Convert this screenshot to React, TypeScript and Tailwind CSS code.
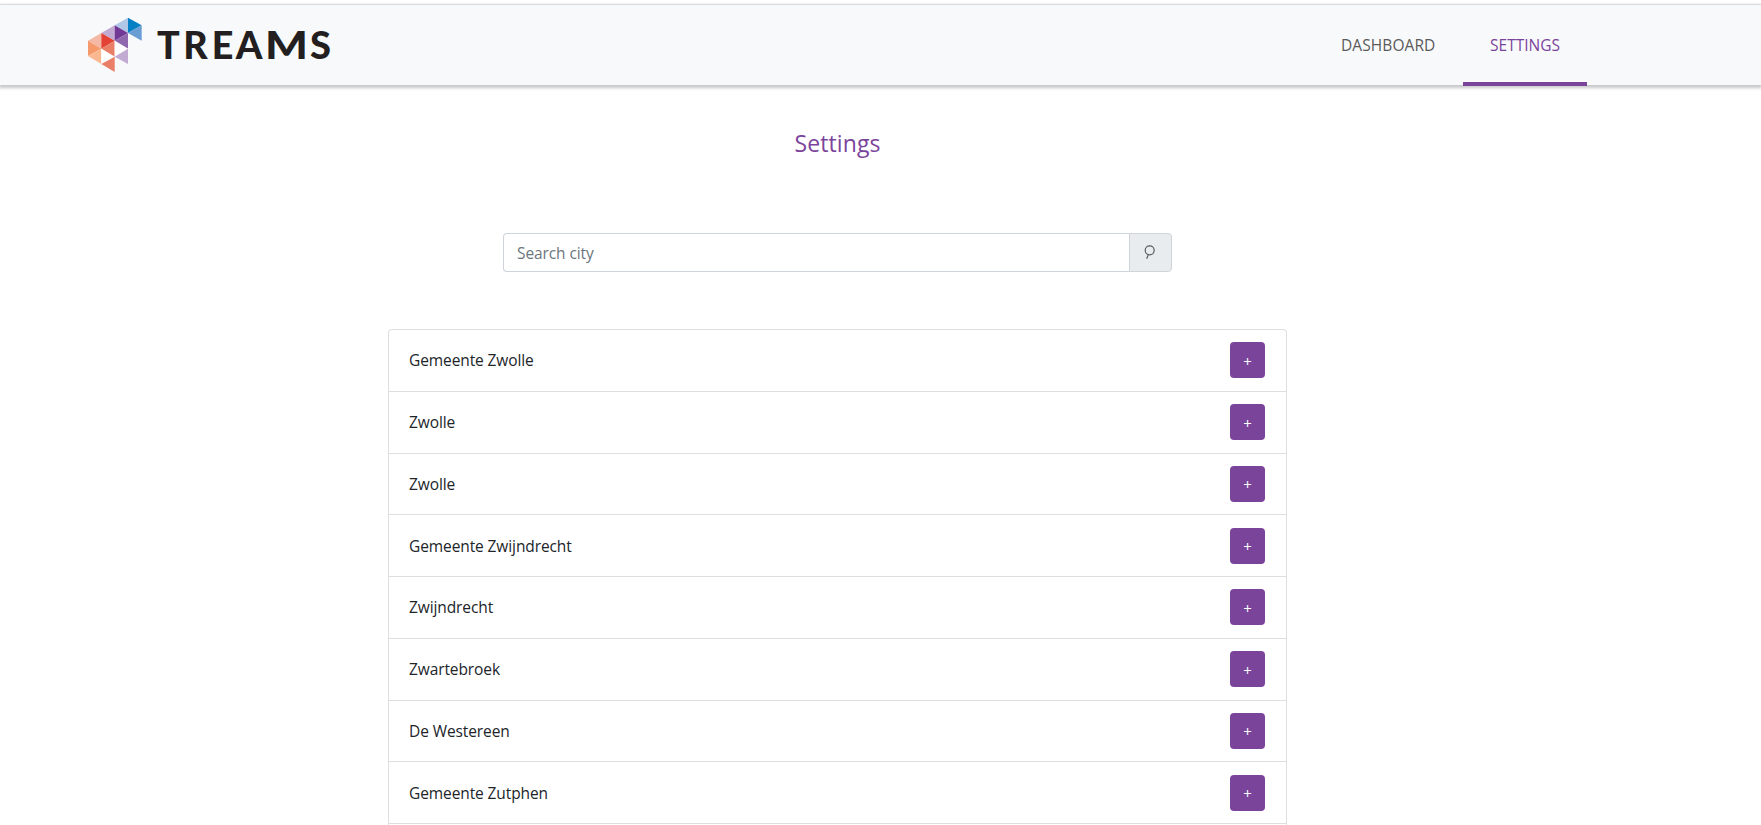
import React from "react";

const cities = [
  "Gemeente Zwolle",
  "Zwolle",
  "Zwolle",
  "Gemeente Zwijndrecht",
  "Zwijndrecht",
  "Zwartebroek",
  "De Westereen",
  "Gemeente Zutphen",
];

const triangles: [string, string][] = [
  ["24,122 64,99 64,146", "#f4b9a5"],
  ["24,122 24,168 64,146", "#f6996a"],
  ["24,168 64,146 64,192", "#fab891"],
  ["64,99 104,76 104,122", "#c2abd3"],
  ["64,99 64,146 104,122", "#e34234"],
  ["64,146 104,122 104,170", "#e97f66"],
  ["64,146 64,192 104,170", "#ffffff"],
  ["64,192 104,170 104,216", "#e97f66"],
  ["104,76 144,53 144,99", "#b0c8e8"],
  ["104,76 104,122 144,99", "#713895"],
  ["104,122 144,99 144,146", "#9068ae"],
  ["104,122 104,170 144,146", "#ffffff"],
  ["104,170 144,146 144,192", "#c2abd3"],
  ["144,53 144,99 185,76", "#0580c5"],
  ["144,99 185,76 185,122", "#6a9dd4"],
];

function Logo() {
  return (
    <svg className="h-[72px] w-[260px]" viewBox="0 15 780 216" role="img" aria-label="TREAMS">
      {triangles.map(([points, fill]) => (
        <polygon key={points} points={points} fill={fill} />
      ))}
      <g fontFamily="Lato, sans-serif" fontWeight="900" fontSize="113" fill="#231f20">
        <text x="231 310 395" y="176">
          TRE
        </text>
        <text x="467" y="176" textLength="80" lengthAdjust="spacingAndGlyphs">
          A
        </text>
        <text x="555" y="176" textLength="129" lengthAdjust="spacingAndGlyphs">
          M
        </text>
        <text x="690" y="176" textLength="63" lengthAdjust="spacingAndGlyphs">
          S
        </text>
      </g>
    </svg>
  );
}

export default function App() {
  return (
    <div className="h-[825px] overflow-hidden bg-white pt-1 font-['Open_Sans',sans-serif] text-[#212529]">
      <header className="flex h-[81px] items-start justify-between border-t border-[#d9dbe1] bg-[#f8f9fb] pr-[174px] pl-20 shadow-[0_2px_3px_1px_rgba(0,0,0,0.22)]">
        <Logo />
        <nav className="flex h-[81px] text-[15.5px] leading-6">
          <a className="w-[124px] pt-7 pl-[2px] tracking-[0.08px] text-[#5a5a5a]">DASHBOARD</a>
          <a className="w-[124px] border-b-4 border-[#7b449b] pt-7 text-center text-[#7b449b]">SETTINGS</a>
        </nav>
      </header>

      <main className="ml-[388px] flex w-[899px] flex-col items-center">
        <h1 className="mt-[42px] text-[23px] leading-8 tracking-[0.1px] text-[#7b449b]">Settings</h1>
        <div className="mt-[74px] flex h-[39px] w-[669px]">
          <input
            className="min-w-0 flex-1 rounded-l border border-r-0 border-[#ced4da] px-[13px] pt-[2px] text-[15.5px] tracking-[-0.1px] outline-none placeholder:text-[#6c757d]"
            placeholder="Search city"
          />
          <button className="flex w-[43px] items-center justify-center rounded-r border border-[#ced4da] bg-[#e9ecef] pr-[2px] pb-px">
            <svg className="h-4 w-4" viewBox="0 0 16 16" fill="none" stroke="#555b61" strokeWidth="1.2">
              <circle cx="7.7" cy="6.3" r="4.5" />
              <path d="M6.3 10.6 4.7 14.8" />
            </svg>
          </button>
        </div>

        <ul className="mt-[57px] w-full rounded-t border border-b-0 border-[#dfdfdf]">
          {cities.map((city, i) => (
            <li
              key={i}
              className="flex h-[61.75px] items-center justify-between border-b border-[#dfdfdf] pr-[21px] pl-5"
            >
              <span className="text-[15.5px] leading-6 tracking-[-0.1px]">{city}</span>
              <button className="h-9 w-[35px] rounded bg-[#7b449b] pt-[2px] text-[15px] leading-none text-white">
                +
              </button>
            </li>
          ))}
          <li className="h-[61.75px]" />
        </ul>
      </main>
    </div>
  );
}
